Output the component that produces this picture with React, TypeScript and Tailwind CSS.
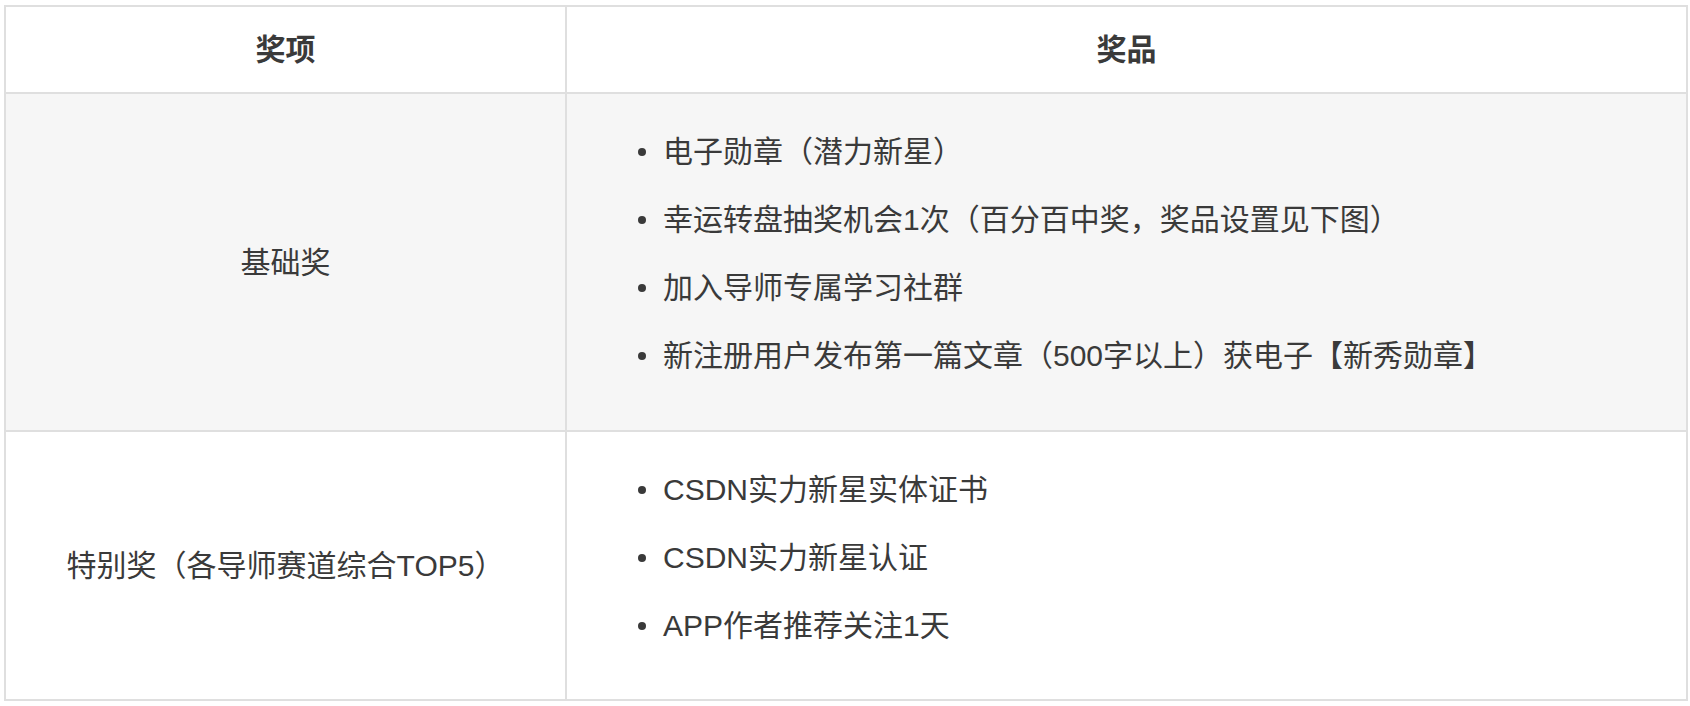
const basicPrizes: string[] = [
    "电子勋章（潜力新星）",
    "幸运转盘抽奖机会1次（百分百中奖，奖品设置见下图）",
    "加入导师专属学习社群",
    "新注册用户发布第一篇文章（500字以上）获电子【新秀勋章】",
];

const specialPrizes: string[] = [
    "CSDN实力新星实体证书",
    "CSDN实力新星认证",
    "APP作者推荐关注1天",
];

function PrizeList({ items }: { items: string[] }) {
    return (
        <ul className="pl-[71px] pb-4 flex flex-col gap-6">
            {items.map((item) => (
                <li key={item} className="flex items-center gap-[17px] leading-[44px]">
                    <span className="w-[8px] h-[8px] rounded-full bg-[#3a3a3a] shrink-0" />
                    <span>{item}</span>
                </li>
            ))}
        </ul>
    );
}

function App() {
    return (
        <div className="min-h-screen bg-white pt-[5px] pl-[4px] text-[30px] text-[#3a3a3a] [font-family:'Liberation_Sans','Noto_Sans_CJK_SC',sans-serif]">
            <div className="w-[1684px] border-2 border-[#dfdfdf]">
                {/* header */}
                <div className="h-[87px] grid grid-cols-[561px_1fr] border-b-2 border-[#dfdfdf] bg-white font-bold">
                    <div className="flex items-center justify-center border-r-2 border-[#dfdfdf]">奖项</div>
                    <div className="flex items-center justify-center">奖品</div>
                </div>
                {/* basic */}
                <div className="h-[338px] grid grid-cols-[561px_1fr] border-b-2 border-[#dfdfdf] bg-[#f6f6f6]">
                    <div className="flex items-center justify-center border-r-2 border-[#dfdfdf]">基础奖</div>
                    <div className="flex items-center">
                        <PrizeList items={basicPrizes} />
                    </div>
                </div>
                {/* special */}
                <div className="h-[267px] grid grid-cols-[561px_1fr] bg-white">
                    <div className="flex items-center justify-center border-r-2 border-[#dfdfdf]">特别奖（各导师赛道综合TOP5）</div>
                    <div className="flex items-center">
                        <PrizeList items={specialPrizes} />
                    </div>
                </div>
            </div>
        </div>
    );
}

export default App
